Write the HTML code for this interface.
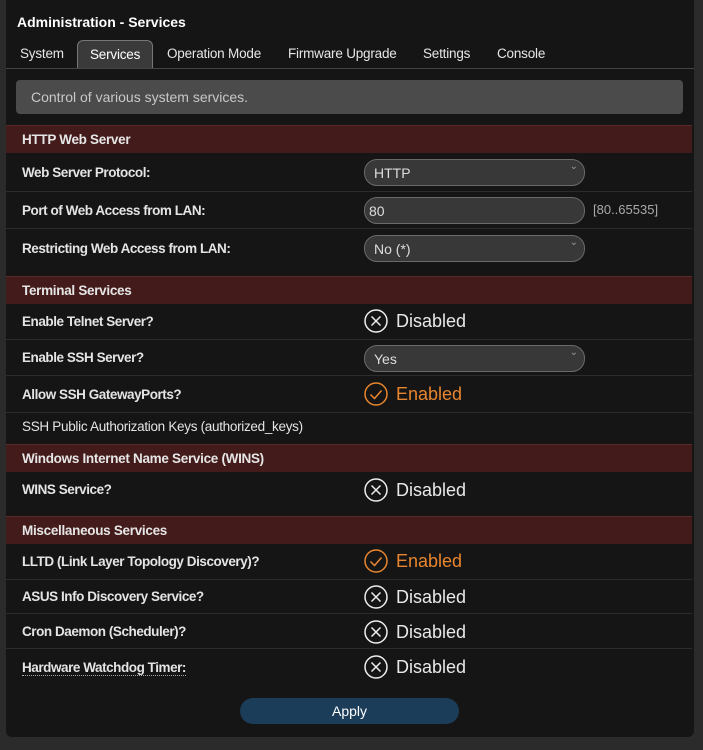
<!DOCTYPE html>
<html><head><style>
*{box-sizing:border-box;margin:0;padding:0}
body{width:703px;height:750px;background:#2b2b2b;font-family:"Liberation Sans",Arial,sans-serif;color:#e8e8e8;position:relative;overflow:hidden}
.panel{position:absolute;left:6px;top:0;width:688px;height:737px;background:#151515;border-radius:0 0 6px 6px}
.a{position:absolute}
.title{left:17px;top:14px;font-size:14px;font-weight:bold;color:#fff}
.tab{top:40px;height:29px;font-size:13.5px;color:#e6e6e6;line-height:28px;letter-spacing:-0.2px}
.tabline{left:6px;top:68px;width:688px;height:1px;background:#444}
.active{border:1px solid #777;border-bottom:none;border-radius:6px 6px 0 0;background:#3a3a3a;padding:0 12px;color:#fff}
.desc{left:16px;top:80px;width:667px;height:34px;background:#4b4b4b;border-radius:4px;font-size:14px;color:#c8c8c8;padding:9px 15px}
.hdr{left:6px;width:686px;height:28px;background:#431b1b;border-top:1px solid #5a2a2a;font-size:13.5px;font-weight:bold;color:#e6e6e6;padding:6px 16px;letter-spacing:-0.3px}
.row{left:6px;width:686px;border-bottom:1px solid #2c2c2c}
.lbl{left:22px;font-size:13.5px;font-weight:bold;color:#e4e4e4;letter-spacing:-0.45px}
.sel{left:364px;width:221px;height:27px;border:1px solid #6a6a6a;border-radius:13px;background:#383838;font-size:14px;color:#ddd;padding:5px 9px}
.sel:after{content:"⌄";position:absolute;right:6px;top:1px;font-size:10px;color:#999}
.inp:after{content:none}
.st{left:364px;height:24px;font-size:18px;line-height:24px;padding-left:32px}
.st svg{position:absolute;left:0;top:0}
.dis{color:#e8e8e8}.en{color:#e8852e}
</style></head><body>
<div class="panel"></div>
<div class="a title">Administration - Services</div>
<div class="a tab" style="left:20px">System</div>
<div class="a tab active" style="left:77px;width:76px">Services</div>
<div class="a tab" style="left:167px">Operation Mode</div>
<div class="a tab" style="left:288px">Firmware Upgrade</div>
<div class="a tab" style="left:423px">Settings</div>
<div class="a tab" style="left:497px">Console</div>
<div class="a tabline"></div>
<div class="a desc">Control of various system services.</div>

<div class="a hdr" style="top:125px">HTTP Web Server</div>
<div class="a row" style="top:154px;height:38px"></div>
<div class="a lbl" style="top:165px">Web Server Protocol:</div>
<div class="a sel" style="top:159px">HTTP</div>
<div class="a row" style="top:192px;height:37px"></div>
<div class="a lbl" style="top:203px">Port of Web Access from LAN:</div>
<div class="a sel inp" style="top:197px;padding-left:4px">80</div>
<div class="a" style="left:593px;top:202px;font-size:13px;color:#aaa">[80..65535]</div>
<div class="a lbl" style="top:241px">Restricting Web Access from LAN:</div>
<div class="a sel" style="top:235px">No (*)</div>

<div class="a hdr" style="top:276px">Terminal Services</div>
<div class="a row" style="top:304px;height:36px"></div>
<div class="a lbl" style="top:314px">Enable Telnet Server?</div>
<div class="a st dis" style="top:309px"><svg width="24" height="24"><circle cx="12" cy="12" r="11" fill="none" stroke="#eee" stroke-width="1.5"/><path d="M7.5 7.5L16.5 16.5M16.5 7.5L7.5 16.5" stroke="#eee" stroke-width="1.5"/></svg>Disabled</div>
<div class="a row" style="top:340px;height:36px"></div>
<div class="a lbl" style="top:350px">Enable SSH Server?</div>
<div class="a sel" style="top:345px">Yes</div>
<div class="a row" style="top:376px;height:37px"></div>
<div class="a lbl" style="top:387px">Allow SSH GatewayPorts?</div>
<div class="a st en" style="top:382px"><svg width="24" height="24"><circle cx="12" cy="12" r="11" fill="none" stroke="#e8852e" stroke-width="1.5"/><path d="M6.5 12.5L10.5 16.5L17.5 8.5" fill="none" stroke="#e8852e" stroke-width="1.5"/></svg>Enabled</div>
<div class="a" style="left:22px;top:419px;font-size:13.5px;color:#e4e4e4;letter-spacing:-0.3px">SSH Public Authorization Keys (authorized_keys)</div>

<div class="a hdr" style="top:444px">Windows Internet Name Service (WINS)</div>
<div class="a lbl" style="top:482px">WINS Service?</div>
<div class="a st dis" style="top:478px"><svg width="24" height="24"><circle cx="12" cy="12" r="11" fill="none" stroke="#eee" stroke-width="1.5"/><path d="M7.5 7.5L16.5 16.5M16.5 7.5L7.5 16.5" stroke="#eee" stroke-width="1.5"/></svg>Disabled</div>

<div class="a hdr" style="top:516px">Miscellaneous Services</div>
<div class="a row" style="top:544px;height:36px"></div>
<div class="a lbl" style="top:554px">LLTD (Link Layer Topology Discovery)?</div>
<div class="a st en" style="top:549px"><svg width="24" height="24"><circle cx="12" cy="12" r="11" fill="none" stroke="#e8852e" stroke-width="1.5"/><path d="M6.5 12.5L10.5 16.5L17.5 8.5" fill="none" stroke="#e8852e" stroke-width="1.5"/></svg>Enabled</div>
<div class="a row" style="top:580px;height:34px"></div>
<div class="a lbl" style="top:589px">ASUS Info Discovery Service?</div>
<div class="a st dis" style="top:585px"><svg width="24" height="24"><circle cx="12" cy="12" r="11" fill="none" stroke="#eee" stroke-width="1.5"/><path d="M7.5 7.5L16.5 16.5M16.5 7.5L7.5 16.5" stroke="#eee" stroke-width="1.5"/></svg>Disabled</div>
<div class="a row" style="top:614px;height:35px"></div>
<div class="a lbl" style="top:624px">Cron Daemon (Scheduler)?</div>
<div class="a st dis" style="top:620px"><svg width="24" height="24"><circle cx="12" cy="12" r="11" fill="none" stroke="#eee" stroke-width="1.5"/><path d="M7.5 7.5L16.5 16.5M16.5 7.5L7.5 16.5" stroke="#eee" stroke-width="1.5"/></svg>Disabled</div>
<div class="a lbl" style="top:660px;border-bottom:1px dotted #aaa">Hardware Watchdog Timer:</div>
<div class="a st dis" style="top:655px"><svg width="24" height="24"><circle cx="12" cy="12" r="11" fill="none" stroke="#eee" stroke-width="1.5"/><path d="M7.5 7.5L16.5 16.5M16.5 7.5L7.5 16.5" stroke="#eee" stroke-width="1.5"/></svg>Disabled</div>

<div class="a" style="left:240px;top:698px;width:219px;height:26px;background:#1b3d5a;border-radius:13px;font-size:14px;color:#fff;text-align:center;line-height:26px">Apply</div>
</body></html>
